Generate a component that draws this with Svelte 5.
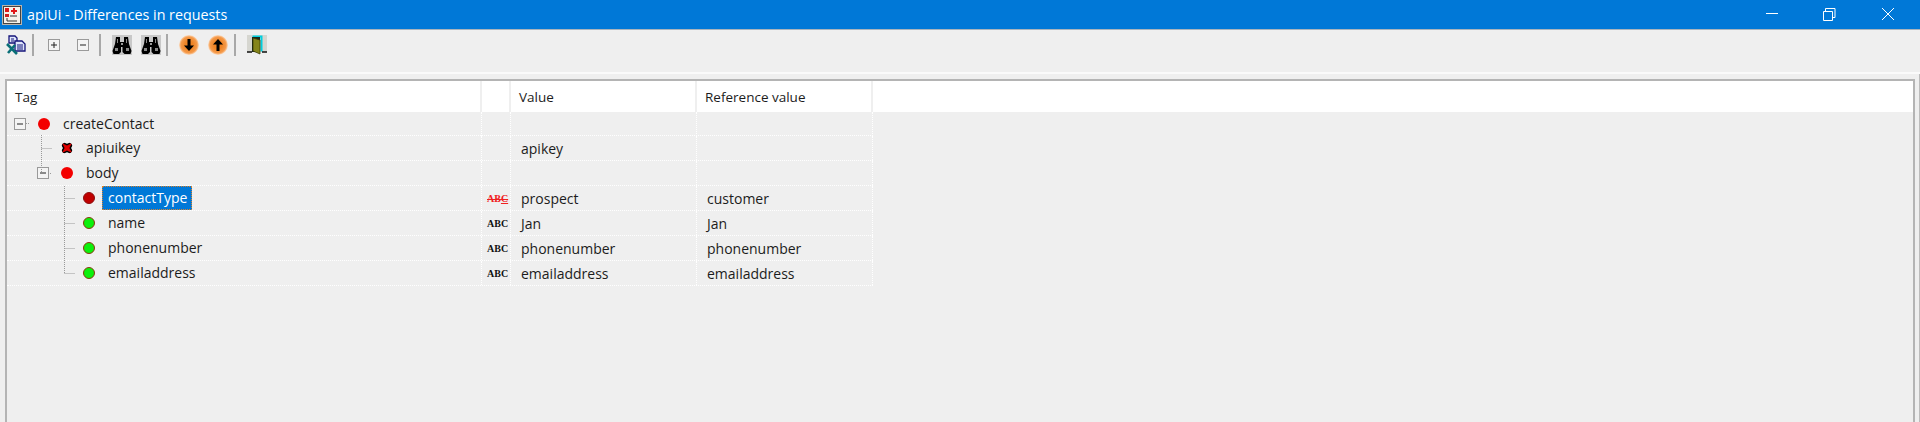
<script>
  const rows = [
    { level: 0, status: "red", tag: "createContact", expander: true, value: "", ref: "" },
    { level: 1, status: "error", tag: "apiuikey", value: "apikey", ref: "" },
    { level: 1, status: "red", tag: "body", expander: true, value: "", ref: "" },
    { level: 2, status: "dark", tag: "contactType", type: "bad", value: "prospect", ref: "customer", selected: true },
    { level: 2, status: "green", tag: "name", type: "ok", value: "Jan", ref: "Jan" },
    { level: 2, status: "green", tag: "phonenumber", type: "ok", value: "phonenumber", ref: "phonenumber" },
    { level: 2, status: "green", tag: "emailaddress", type: "ok", value: "emailaddress", ref: "emailaddress" }
  ];
</script>

{#snippet binoculars()}
  <svg width="20" height="20" viewBox="0 0 20 20">
    <rect width="20" height="20" fill="#c8c8c8" />
    <path d="M4 2h4v5h4V2h4l1 7 2.500 7-1 3h-6l-2-2v-5H9v5l-2 2H1.500l-1-3L3 9z" fill="#000" />
    <path d="M3 13h3v3H3zM14 13h3v3h-3zM5 4h1v4H5zM14 4h1v4h-1z" fill="#888" />
    <path d="M9 8h2v2H9z" fill="#999" />
  </svg>
{/snippet}

{#snippet arrow(up)}
  <svg width="20" height="20" viewBox="0 0 20 20">
    <circle cx="10" cy="10" r="10" fill="url(#orange)" />
    {#if up}
      <path d="M10 4l5 5.500h-3.500V16h-3V9.500H5z" fill="#000" />
    {:else}
      <path d="M10 16l5-5.500h-3.500V4h-3v6.500H5z" fill="#000" />
    {/if}
  </svg>
{/snippet}

{#snippet boxSign(plus)}
  <svg width="12" height="12" viewBox="0 0 12 12">
    <rect x=".5" y=".5" width="11" height="11" fill="#f4f4f4" stroke="#9a9a9a" />
    <path d={plus ? "M3 6h6M6 3v6" : "M3 6h6"} stroke="#222" fill="none" />
  </svg>
{/snippet}

<svg class="defs" width="0" height="0">
  <defs>
    <radialGradient id="orange">
      <stop offset="0.4" stop-color="#ee8426" />
      <stop offset="0.8" stop-color="#f59a4a" />
      <stop offset="1" stop-color="#fbdcc0" />
    </radialGradient>
  </defs>
</svg>

<div class="window">
  <header class="titlebar">
    <svg class="logo" width="20" height="20" viewBox="0 0 20 20">
      <rect width="20" height="20" fill="#b9b4ac" />
      <rect x="1.500" y="1.500" width="17" height="17" fill="#f6f2ea" stroke="#444" />
      <rect x="3" y="3" width="4" height="4" fill="#e01818" />
      <rect x="3" y="9" width="4" height="3" fill="#d02020" />
      <path d="M11 3h2v2h2v2h-2v2h-2V7H9V5h2z" fill="#e01818" />
      <path d="M5 13v3h10M8 11h7" stroke="#333" fill="none" />
    </svg>
    <span class="title">apiUi - Differences in requests</span>
    <div class="controls">
      <svg width="58" height="29" viewBox="0 0 58 29"><path d="M23 13.500h12" stroke="#fff" /></svg>
      <svg width="58" height="29" viewBox="0 0 58 29">
        <path d="M22.500 11.500h9v9h-9zM24.500 11V8.500h9.500v9H32" stroke="#fff" fill="none" />
      </svg>
      <svg width="58" height="29" viewBox="0 0 58 29"><path d="M23 8l12 12M35 8L23 20" stroke="#fff" /></svg>
    </div>
  </header>

  <div class="toolbar">
    <button>
      <svg width="20" height="20" viewBox="0 0 20 20">
        <path d="M3 1h6l2 2v5H3z" fill="#dfe6fb" stroke="#14147a" stroke-width="1.300" />
        <path d="M9 6h7l3 3v7H9z" fill="#dfe6fb" stroke="#14147a" stroke-width="1.300" />
        <path d="M11 10h6M11 12h6M11 14h6M5 4h3M5 6h3" stroke="#14147a" />
        <path d="M1 9l10 10M2 18l7-8" stroke="#0a6f78" stroke-width="2.600" />
      </svg>
    </button>
    <span class="sep first"></span>
    <button>{@render boxSign(true)}</button>
    <button>{@render boxSign(false)}</button>
    <span class="sep"></span>
    <button>{@render binoculars()}</button>
    <button>{@render binoculars()}</button>
    <span class="sep tight"></span>
    <button>{@render arrow(false)}</button>
    <button>{@render arrow(true)}</button>
    <span class="sep"></span>
    <button>
      <svg width="20" height="20" viewBox="0 0 20 20">
        <rect width="20" height="17" fill="#d6d6d0" />
        <path d="M5.500 1.500h9v15" stroke="#00d0e0" stroke-width="2" fill="none" />
        <path d="M5 2h8v15H5" fill="#1c2a1c" />
        <path d="M6 3l7 2v14l-7-3z" fill="#85851a" stroke="#333300" stroke-width=".7" />
        <path d="M0 17h5M15 17h5" stroke="#111" stroke-width="1.500" />
      </svg>
    </button>
  </div>

  <main class="content">
    <section class="panel">
      <div class="head">
        <div class="th">Tag</div>
        <div class="th"></div>
        <div class="th">Value</div>
        <div class="th">Reference value</div>
      </div>

      <div class="tree">
        {#each rows as row}
          <div class="row">
            <div class="cell tagcell" style="padding-left: {Math.ceil(row.level * 22.5) + 7}px">
              <span class="expander">
                {#if row.expander}{@render boxSign(false)}{/if}
              </span>
              {#if row.status === "error"}
                <svg class="dot" width="12" height="12" viewBox="0.500 0.500 11 11">
                  <path d="M1 2l1-1 2 1 2 1 2-1 2-1 1 1-1 2-1 2 1 2 1 2-1 1-2-1-2-1-2 1-2 1-1-1 1-2 1-2-1-2z" fill="#e00000" stroke="#000" stroke-width="1.400" />
                </svg>
              {:else}
                <span class="dot {row.status}"></span>
              {/if}
              <span class="label" class:selected={row.selected}>{row.tag}</span>
            </div>
            <div class="cell typecell">
              {#if row.type === "bad"}
                <span class="abc bad">AB<u>C</u></span>
              {:else if row.type}
                <span class="abc">ABC</span>
              {/if}
            </div>
            <div class="cell valuecell">{row.value}</div>
            <div class="cell valuecell">{row.ref}</div>
          </div>
        {/each}

        <svg class="lines" width="120" height="175" viewBox="0 0 120 175">
          <path d="M34.500 23v38M34.500 36.500H45M41 61.500h4M57.500 74v88M57.500 86.500H68M57.500 111.500H68M57.500 136.500H68M57.500 161.500H68M19 11.500h4" stroke="#999" fill="none" stroke-dasharray="1 1" />
        </svg>
      </div>
    </section>
  </main>
</div>

<style>
  :global(body) {
    overflow: hidden;
  }

  .defs {
    position: absolute;
  }

  .window {
    display: flex;
    flex-direction: column;
    height: 422px;
    overflow: hidden;
    background: #efefef;
    font-family: "Open Sans", "Noto Sans", sans-serif;
    font-size: 14px;
    color: #1c1c1c;
  }

  .titlebar {
    display: flex;
    align-items: center;
    flex: 0 0 30px;
    box-sizing: border-box;
    padding-left: 2px;
    background: #0078d7;
    border-bottom: 1px solid #a9b4bd;
    color: #fff;
  }

  .logo {
    margin-right: 5px;
  }

  .title {
    font-size: 14.300px;
  }

  .controls {
    display: flex;
    margin-left: auto;
    margin-right: 3px;
  }

  .toolbar {
    display: flex;
    align-items: center;
    flex: 0 0 44px;
    box-sizing: border-box;
    padding: 0 0 12px 1px;
    border-bottom: 2px solid #fafafa;
  }

  .toolbar button {
    display: flex;
    align-items: center;
    justify-content: center;
    width: 29px;
    height: 22px;
    padding: 0;
    border: none;
    background: none;
  }

  .sep {
    width: 2px;
    height: 22px;
    margin: 0 6px 0 2px;
    background: #a8a8a8;
  }

  .sep.first {
    margin-right: 5px;
  }

  .sep.tight {
    margin-left: 1px;
  }

  .content {
    flex: 1;
    display: flex;
    min-height: 0;
    padding: 5px 4px 0 5px;
    border-right: 1px solid #bcbcbc;
  }

  .panel {
    flex: 1;
    border: 2px solid #b4b4b4;
    border-bottom: none;
  }

  .head,
  .row {
    display: grid;
    grid-template-columns: 475px 29px 186px 176px;
  }

  .head {
    height: 31px;
    background: #fff;
  }

  .th {
    display: flex;
    align-items: center;
    padding-left: 8px;
    border-right: 2px solid #efefef;
    font-size: 13.500px;
  }

  .tree {
    position: relative;
  }

  .row {
    width: 866px;
    height: 25px;
    box-sizing: border-box;
    border-bottom: 1px dotted #fff;
  }

  .row:first-child {
    height: 24px;
  }

  .cell {
    display: flex;
    align-items: center;
    border-right: 1px dotted #fff;
    white-space: nowrap;
  }

  .typecell {
    padding-left: 5px;
  }

  .valuecell {
    padding-left: 10px;
  }

  .expander {
    display: flex;
    width: 24px;
    flex: none;
  }

  .dot {
    flex: none;
    width: 12px;
    height: 12px;
    box-sizing: border-box;
    border-radius: 50%;
  }

  .dot.red {
    background: #f30000;
  }

  .dot.dark {
    background: #c00000;
    border: 1px solid #8a1010;
  }

  .dot.green {
    background: #0cf00c;
    border: 1px solid #8a3a10;
  }

  .label {
    margin-left: 7px;
    padding: 2px 5px 2px 6px;
    line-height: 20px;
  }

  .label.selected {
    background: #0078d7;
    color: #fff;
    outline: 1px dotted #d9822b;
    outline-offset: -1px;
  }

  .abc {
    font-family: "Liberation Serif", serif;
    font-size: 10px;
    font-weight: 700;
    color: #111;
  }

  .abc.bad {
    color: #f02020;
    text-decoration: line-through;
  }

  .lines {
    position: absolute;
    top: 0;
    left: 0;
  }
</style>
